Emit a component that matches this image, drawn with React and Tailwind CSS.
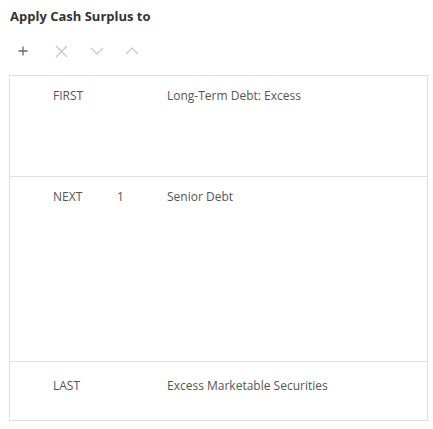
import React from "react";

const rows = [
  { a: "FIRST", b: "", c: "Long-Term Debt: Excess", h: "h-[100px] pt-[12px]" },
  { a: "NEXT", b: "1", c: "Senior Debt", h: "h-[185px] pt-[12px]" },
  { a: "LAST", b: "", c: "Excess Marketable Securities", h: "h-[59px] pt-[16px]" },
];

export default function App() {
  return (
    <div
      className="w-[433px] h-[429px] bg-white text-[#555]"
      style={{ fontFamily: '"Open Sans", "Noto Sans", sans-serif' }}
    >
      <div className="pl-[10px] pt-[7px] text-[13px] font-bold text-[#333] leading-[18px]">
        Apply Cash Surplus to
      </div>
      <div className="flex items-center pl-[7px] mt-[17px] h-[18px]">
        <button className="w-[32px] h-[18px] flex items-center justify-center">
          <svg width="10" height="10" viewBox="0 0 10 10">
            <path d="M5 0.5V9.5M0.5 5H9.5" stroke="#666" strokeWidth="1.3" />
          </svg>
        </button>
        <button className="w-[36px] h-[18px] flex items-center justify-center ml-[4px]">
          <svg width="13" height="13" viewBox="0 0 13 13">
            <path d="M1 1L12 12M12 1L1 12" stroke="#c4c4c4" strokeWidth="1.2" />
          </svg>
        </button>
        <button className="w-[35px] h-[18px] flex items-center justify-center">
          <svg width="14" height="8" viewBox="0 0 14 8">
            <path d="M1 1L7 7L13 1" stroke="#c4c4c4" strokeWidth="1.1" fill="none" />
          </svg>
        </button>
        <button className="w-[35px] h-[18px] flex items-center justify-center">
          <svg width="14" height="8" viewBox="0 0 14 8">
            <path d="M1 7L7 1L13 7" stroke="#c4c4c4" strokeWidth="1.1" fill="none" />
          </svg>
        </button>
      </div>
      <div className="ml-[9px] mt-[15px] w-[419px] border border-[#e0e0e0]">
        {rows.map((r, i) => (
          <div
            key={i}
            className={`${r.h} flex text-[12px] leading-[16px] ${
              i > 0 ? "border-t border-[#e0e0e0]" : ""
            }`}
          >
            <div className="w-[107px] pl-[43px]">{r.a}</div>
            <div className="w-[50px]">{r.b}</div>
            <div className="flex-1">{r.c}</div>
          </div>
        ))}
      </div>
    </div>
  );
}
